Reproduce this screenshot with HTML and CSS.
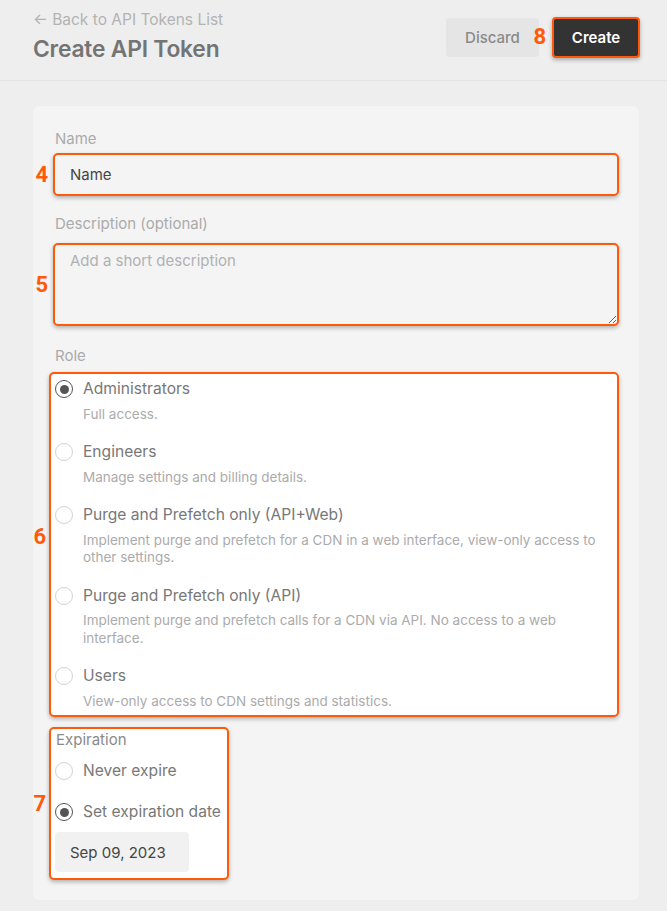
FILE: index.html
```html
<!DOCTYPE html>
<html lang="en">
<head>
<meta charset="utf-8">
<title>Create API Token</title>
<link rel="stylesheet" href="styles.css">
</head>
<body>
<header class="topbar">
  <div class="titles">
    <a class="back" href="#">← Back to API Tokens List</a>
    <h1 class="title">Create API Token</h1>
  </div>
  <div class="actions">
    <button class="btn btn-discard" type="button">Discard</button>
    <div class="hl-wrap">
      <span class="anno anno-8">8</span>
      <button class="btn btn-create" type="button">Create</button>
    </div>
  </div>
</header>

<main class="main">
  <form class="card">
    <label class="field-label" for="name">Name</label>
    <div class="hl-wrap">
      <span class="anno anno-mid">4</span>
      <input id="name" class="text-input" type="text" value="Name">
    </div>

    <label class="field-label field-label-desc" for="desc">Description (optional)</label>
    <div class="hl-wrap">
      <span class="anno anno-mid">5</span>
      <textarea id="desc" class="text-area" placeholder="Add a short description"></textarea>
    </div>

    <div class="field-label field-label-role">Role</div>
    <div class="hl-wrap role-box">
      <span class="anno anno-6">6</span>
      <div class="option">
        <div class="option-title"><span class="radio checked"></span>Administrators</div>
        <div class="option-desc">Full access.</div>
      </div>
      <div class="option">
        <div class="option-title"><span class="radio"></span>Engineers</div>
        <div class="option-desc">Manage settings and billing details.</div>
      </div>
      <div class="option">
        <div class="option-title"><span class="radio"></span>Purge and Prefetch only (API+Web)</div>
        <div class="option-desc">Implement purge and prefetch for a CDN in a web interface, view-only access to other settings.</div>
      </div>
      <div class="option">
        <div class="option-title"><span class="radio"></span>Purge and Prefetch only (API)</div>
        <div class="option-desc">Implement purge and prefetch calls for a CDN via API. No access to a web interface.</div>
      </div>
      <div class="option">
        <div class="option-title"><span class="radio"></span>Users</div>
        <div class="option-desc">View-only access to CDN settings and statistics.</div>
      </div>
    </div>

    <div class="hl-wrap exp-box">
      <span class="anno anno-mid anno-7">7</span>
      <div class="exp-label">Expiration</div>
      <div class="option-title exp-opt"><span class="radio"></span>Never expire</div>
      <div class="option-title exp-opt exp-opt-2"><span class="radio checked"></span>Set expiration date</div>
      <div class="date-box">Sep 09, 2023</div>
    </div>
  </form>
</main>
</body>
</html>
```

FILE: styles.css
```css
* { box-sizing: border-box; }

html, body {
  margin: 0;
  padding: 0;
  background: #eeeeee;
  font-family: Inter, "Noto Sans", "Liberation Sans", sans-serif;
}

.topbar {
  height: 81px;
  padding: 10px 27px 0 33px;
  display: flex;
  justify-content: space-between;
  align-items: flex-start;
  border-bottom: 1px solid #e3e3e3;
}

.back {
  display: block;
  font-size: 15.5px;
  line-height: 20px;
  color: #b3b3b3;
  text-decoration: none;
}

.title {
  margin: 4px 0 0;
  font-size: 22.8px;
  line-height: 30px;
  font-weight: 600;
  color: #747474;
  letter-spacing: -0.2px;
}

.actions {
  display: flex;
  align-items: center;
  gap: 13px;
  margin-top: 7px;
}

.btn {
  font-family: inherit;
  font-size: 15px;
  border-radius: 4px;
  cursor: pointer;
}

.btn-discard {
  width: 93px;
  height: 39px;
  border: 0;
  background: #e5e5e5;
  color: #8a8a8a;
  font-weight: 500;
}

.btn-create {
  display: block;
  width: 88px;
  height: 41px;
  border: 2px solid #ff5a0a;
  background: #333333;
  color: #ffffff;
  font-weight: 600;
  box-shadow: 0 2px 4px rgba(0, 0, 0, 0.3);
}

.hl-wrap { position: relative; }

.anno {
  position: absolute;
  font-family: Roboto, "Liberation Sans", sans-serif;
  font-weight: 700;
  font-size: 22px;
  line-height: 26px;
  color: #ff5a0a;
}

.anno-8 { right: calc(100% + 6px); top: 7px; }
.anno-mid { right: calc(100% + 5px); top: 50%; transform: translateY(-50%); }
.anno-6 { right: calc(100% + 5px); top: 150px; }
.anno-7 { right: calc(100% + 5px); }

.main {
  padding: 25px 28px 11px 33px;
}

.card {
  background: #f4f4f4;
  border-radius: 6px;
  padding: 22px 20px 20px;
}

.field-label {
  display: block;
  font-size: 15px;
  line-height: 20px;
  color: #ababab;
  margin: 1px 0 4px 2px;
}

.field-label-desc { margin-top: 18px; margin-bottom: 9px; }
.field-label-role { margin-top: 20px; margin-bottom: 6px; }

.text-input,
.text-area {
  display: block;
  width: 100%;
  border: 2px solid #ff5a0a;
  border-radius: 5px;
  background: #f4f4f4;
  font-family: inherit;
  font-size: 15px;
  color: #444444;
  box-shadow: 0 2px 4px rgba(0, 0, 0, 0.28);
  outline: none;
}

.text-input {
  height: 43px;
  padding: 0 15px;
}

.text-area {
  height: 83px;
  padding: 6px 15px;
  line-height: 20px;
  resize: vertical;
}

.text-area::placeholder { color: #b1b1b1; }

.role-box {
  margin-left: -4px;
  border: 2px solid #ff5a0a;
  border-radius: 5px;
  background: #ffffff;
  padding: 4px 8px 5px 4px;
  box-shadow: 0 2px 4px rgba(0, 0, 0, 0.28);
}

.option + .option { margin-top: 18px; }

.option-title {
  display: flex;
  align-items: center;
  font-size: 15.6px;
  line-height: 22px;
  color: #787878;
}

.option-desc {
  margin: 5.5px 0 0 28px;
  font-size: 13.5px;
  line-height: 17.5px;
  color: #ababab;
}

.radio {
  flex: none;
  width: 18px;
  height: 18px;
  margin-right: 10px;
  border: 1px solid #d2d2d2;
  border-radius: 50%;
  background: #ffffff;
  position: relative;
}

.radio.checked {
  border: 1.5px solid #555555;
}

.radio.checked::after {
  content: "";
  position: absolute;
  left: 50%;
  top: 50%;
  width: 9px;
  height: 9px;
  margin: -4.5px 0 0 -4.5px;
  border-radius: 50%;
  background: #555555;
}

.exp-box {
  width: 180px;
  margin: 10px 0 0 -4px;
  border: 2px solid #ff5a0a;
  border-radius: 5px;
  background: #ffffff;
  padding: 1px 0 6px 4px;
  box-shadow: 0 2px 4px rgba(0, 0, 0, 0.28);
}

.exp-label {
  font-size: 15px;
  line-height: 20px;
  color: #8a8a8a;
  margin-left: 1px;
}

.exp-opt { margin-top: 10px; }
.exp-opt-2 { margin-top: 19px; }

.date-box {
  margin-top: 9px;
  width: 134px;
  height: 40px;
  padding-left: 15px;
  display: flex;
  align-items: center;
  background: #f1f1f1;
  border-radius: 4px;
  font-size: 15px;
  color: #444444;
}
```
